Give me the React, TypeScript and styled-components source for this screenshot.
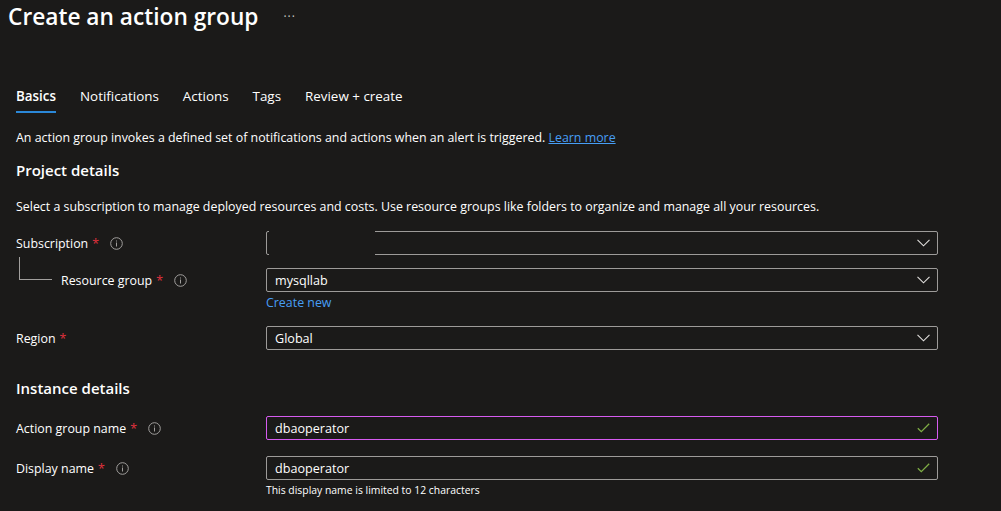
import React from "react";
import styled, { createGlobalStyle } from "styled-components";

const Global = createGlobalStyle`
  html, body { margin: 0; padding: 0; background: #1b1a19; }
  body { font-family: "Open Sans", "Noto Sans", sans-serif; color: #ffffff; }
  * { box-sizing: border-box; }
`;

const Page = styled.div`
  width: 1001px;
  height: 511px;
  overflow: hidden;
  background: #1b1a19;
`;

const Header = styled.div`
  display: flex;
  align-items: center;
  gap: 25px;
  padding: 1px 0 0 8px;
  height: 33px;
`;

const Title = styled.h1`
  margin: 0;
  font-size: 22.7px;
  font-weight: 600;
  line-height: 32px;
  color: #ffffff;
`;

const More = styled.span`
  font-size: 12px;
  color: #c8c6c4;
  letter-spacing: 1px;
  margin-top: -1px;
`;

const Body = styled.div`
  padding: 0 16px;
`;

const TabBar = styled.div`
  display: flex;
  gap: 24px;
  margin-top: 53px;
`;

const Tab = styled.div<{ $active?: boolean }>`
  font-size: 13.4px;
  line-height: 20px;
  padding-bottom: 5px;
  font-weight: ${(p) => (p.$active ? 600 : 400)};
  color: #ffffff;
  border-bottom: 2px solid ${(p) => (p.$active ? "#2b88d8" : "transparent")};
`;

const Text = styled.p<{ $top: number }>`
  margin: ${(p) => p.$top}px 0 0;
  font-size: 12.4px;
  line-height: 20px;
  color: #ffffff;
`;

const Link = styled.a<{ $underline?: boolean }>`
  color: #479ef5;
  text-decoration: ${(p) => (p.$underline ? "underline" : "none")};
  cursor: pointer;
`;

const Heading = styled.h2<{ $top: number }>`
  margin: ${(p) => p.$top}px 0 0;
  font-size: 15px;
  font-weight: 600;
  line-height: 22px;
  color: #ffffff;
`;

const Row = styled.div<{ $top: number }>`
  display: grid;
  grid-template-columns: 250px 672px;
  margin-top: ${(p) => p.$top}px;
`;

const LabelCell = styled.div`
  display: flex;
  align-items: center;
  height: 24px;
  font-size: 12.4px;
  color: #ffffff;
`;

const Connector = styled.span`
  align-self: flex-start;
  width: 33px;
  height: 23px;
  margin: -11px 9px 0 3px;
  border-left: 1px solid #a19f9d;
  border-bottom: 1px solid #a19f9d;
`;

const Required = styled.span`
  color: #e0313d;
  margin-left: 4px;
`;

const InfoWrap = styled.span<{ $gap: number }>`
  display: inline-flex;
  margin-left: ${(p) => p.$gap}px;
`;

const Field = styled.div`
  display: flex;
  flex-direction: column;
`;

const Box = styled.div<{ $focus?: boolean }>`
  position: relative;
  display: flex;
  align-items: center;
  justify-content: space-between;
  height: 24px;
  padding: 0 7px 0 8px;
  border: 1px solid ${(p) => (p.$focus ? "#d65bf0" : "#9d9b99")};
  border-radius: 2px;
  font-size: 12.6px;
  color: #ffffff;
`;

const Mask = styled.div`
  position: absolute;
  left: 2px;
  top: -1px;
  bottom: -1px;
  width: 106px;
  background: #1b1a19;
`;

const CreateNew = styled(Link)`
  font-size: 12.4px;
  line-height: 16px;
  margin-top: 3px;
`;

const Helper = styled.div`
  font-size: 10.4px;
  line-height: 16px;
  margin-top: 2px;
  color: #ffffff;
`;

const Info = () => (
  <svg width="13" height="13" viewBox="0 0 13 13">
    <circle cx="6.5" cy="6.5" r="5.8" fill="none" stroke="#a19f9d" strokeWidth="1" />
    <rect x="6" y="5.5" width="1" height="4" fill="#a19f9d" />
    <rect x="6" y="3.5" width="1" height="1" fill="#a19f9d" />
  </svg>
);

const Chevron = () => (
  <svg width="13" height="8" viewBox="0 0 13 8">
    <path d="M0.5 0.8 L6.5 6.8 L12.5 0.8" fill="none" stroke="#e1dfdd" strokeWidth="1.1" />
  </svg>
);

const Check = () => (
  <svg width="13" height="10" viewBox="0 0 13 10">
    <path d="M0.8 5.2 L4.3 8.6 L12.2 0.8" fill="none" stroke="#7fae45" strokeWidth="1.3" />
  </svg>
);

const Label = ({
  text,
  info,
  gap = 11,
  nested,
}: {
  text: string;
  info?: boolean;
  gap?: number;
  nested?: boolean;
}) => (
  <LabelCell>
    {nested && <Connector />}
    {text}
    <Required>*</Required>
    {info && (
      <InfoWrap $gap={gap}>
        <Info />
      </InfoWrap>
    )}
  </LabelCell>
);

export default function App() {
  return (
    <Page>
      <Global />
      <Header>
        <Title>Create an action group</Title>
        <More>···</More>
      </Header>
      <Body>
        <TabBar>
          <Tab $active>Basics</Tab>
          <Tab>Notifications</Tab>
          <Tab>Actions</Tab>
          <Tab>Tags</Tab>
          <Tab>Review + create</Tab>
        </TabBar>
        <Text $top={15}>
          An action group invokes a defined set of notifications and actions when an alert is triggered.{" "}
          <Link $underline>Learn more</Link>
        </Text>
        <Heading $top={11}>Project details</Heading>
        <Text $top={16}>
          Select a subscription to manage deployed resources and costs. Use resource groups like folders to organize
          and manage all your resources.
        </Text>
        <Row $top={14}>
          <Label text="Subscription" info />
          <Field>
            <Box>
              <Mask />
              <span />
              <Chevron />
            </Box>
          </Field>
        </Row>
        <Row $top={13}>
          <Label text="Resource group" info nested />
          <Field>
            <Box>
              mysqllab
              <Chevron />
            </Box>
            <CreateNew>Create new</CreateNew>
          </Field>
        </Row>
        <Row $top={15}>
          <Label text="Region" />
          <Field>
            <Box>
              Global
              <Chevron />
            </Box>
          </Field>
        </Row>
        <Heading $top={27}>Instance details</Heading>
        <Row $top={17}>
          <Label text="Action group name" info />
          <Field>
            <Box $focus>
              dbaoperator
              <Check />
            </Box>
          </Field>
        </Row>
        <Row $top={16}>
          <Label text="Display name" info />
          <Field>
            <Box>
              dbaoperator
              <Check />
            </Box>
            <Helper>This display name is limited to 12 characters</Helper>
          </Field>
        </Row>
      </Body>
    </Page>
  );
}
